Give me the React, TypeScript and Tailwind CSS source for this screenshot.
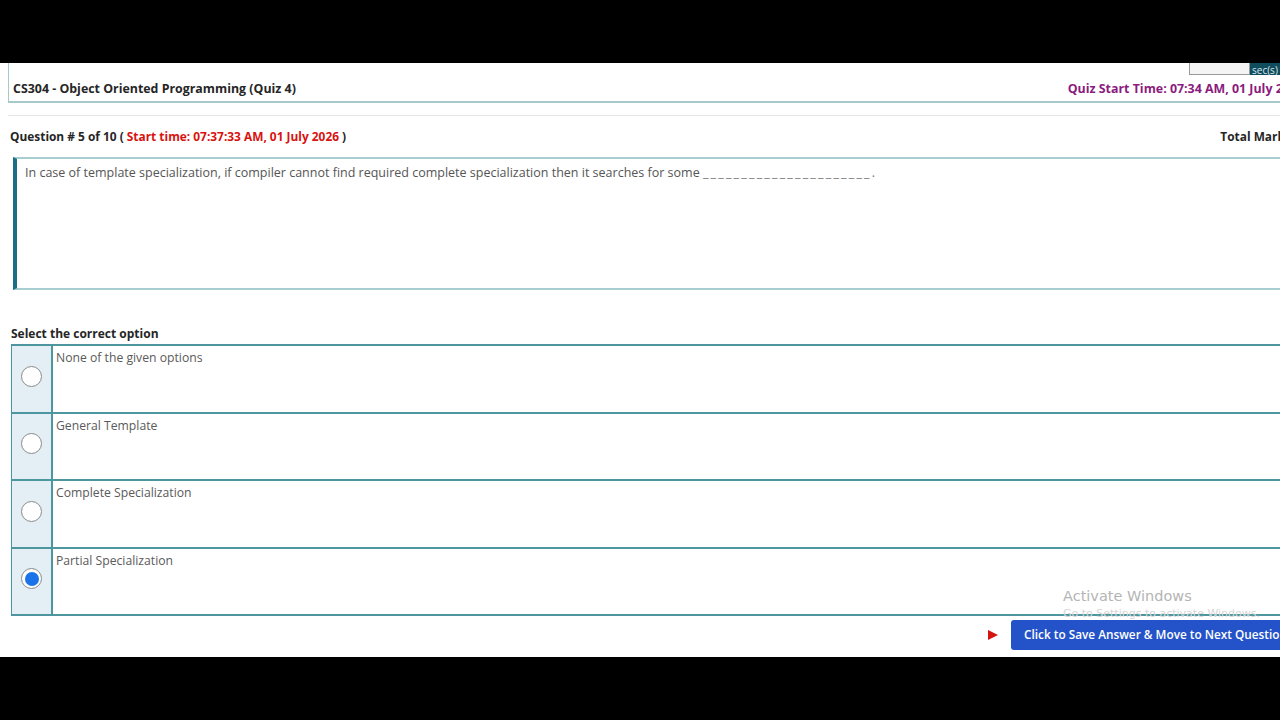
import React, { useState } from 'react';

const OPTIONS = [
  'None of the given options',
  'General Template',
  'Complete Specialization',
  'Partial Specialization',
];

const Radio = ({ checked }: { checked: boolean }) => (
  <span className="w-[21px] h-[21px] rounded-full border border-[#8a8a8a] bg-white flex items-center justify-center">
    {checked && <span className="w-[14px] h-[14px] rounded-full bg-[#1a73e8]" />}
  </span>
);

export default function App() {
  const [selected, setSelected] = useState(3);

  return (
    <div className="w-[1280px] h-[720px] bg-black overflow-hidden flex flex-col" style={{ fontFamily: '"Open Sans", "Liberation Sans", sans-serif' }}>
      <div className="h-[63px] shrink-0" />

      <div className="h-[594px] bg-white relative overflow-hidden flex flex-col">
        {/* quiz header */}
        <div className="ml-[8px] h-[40px] border-l border-b-2 border-[#a8c9cb] flex flex-col">
          <div className="h-[13px] flex justify-end -mt-[1px]">
            <div className="w-[61px] h-[13px] border border-[#9a9a9a] bg-[#f4f4f4]" />
            <div className="w-[30px] h-[13px] bg-[#0f4c5c] overflow-hidden flex items-end pl-[2px]">
              <span className="text-[10px] leading-[10px] text-[#dce8ee]">sec(s)</span>
            </div>
          </div>
          <div className="flex items-center justify-between pl-[4px] h-[24px] mt-[2px]">
            <span className="text-[12.4px] font-bold text-[#262626]">CS304 - Object Oriented Programming (Quiz 4)</span>
            <span className="text-[12.4px] font-bold text-[#8a1b7e] whitespace-nowrap -mr-[24px]">Quiz Start Time: 07:34 AM, 01 July 2026</span>
          </div>
        </div>

        <div className="ml-[8px] mt-[12px] h-[1px] bg-[#e6e6e6]" />

        {/* question heading */}
        <div className="flex items-center justify-between pl-[10px] h-[41px]">
          <span className="text-[11.9px] font-bold text-[#262626]">
            Question # 5 of 10 ( <span className="text-[#d8120f]">Start time: 07:37:33 AM, 01 July 2026</span> )
          </span>
          <span className="text-[11.9px] font-bold text-[#262626] whitespace-nowrap -mr-[24px]">Total Marks: 1</span>
        </div>

        {/* question text */}
        <div className="ml-[13px] h-[133px] border-l-4 border-l-[#1a6f85] border-y-2 border-y-[#a6cdcf] pl-[8px] pt-[5px]">
          <p className="text-[12.5px] text-[#555]">
            In case of template specialization, if compiler cannot find required complete specialization then it searches for some{' '}
            <span className="tracking-[2.2px] text-[#777]">______________________.</span>
          </p>
        </div>

        <div className="pl-[11px] mt-[34px] h-[20px] flex items-center">
          <span className="text-[12px] font-bold text-[#262626]">Select the correct option</span>
        </div>

        {/* options */}
        <div className="ml-[11px] border-t-2 border-[#4c969f] flex flex-col">
          {OPTIONS.map((opt, i) => (
            <div
              key={opt}
              onClick={() => setSelected(i)}
              className="h-[67.5px] flex border-b-2 border-[#4c969f] cursor-pointer"
            >
              <div className="w-[42px] bg-[#e3eef5] border-l border-r-2 border-[#4c969f] flex items-center justify-center pb-[5px]">
                <Radio checked={selected === i} />
              </div>
              <div className="flex-1 pl-[3px] pt-[4px] text-[12.2px] leading-[16px] text-[#5a5a5a]">
                {opt}
              </div>
            </div>
          ))}
        </div>

        {/* save button */}
        <div className="flex items-center justify-end mt-[4px] gap-[12px] -mr-[20px]">
          <svg width="12" height="12" viewBox="0 0 12 12">
            <path d="M1 1 L11 6 L1 11 Z" fill="#d4140f" />
          </svg>
          <button className="h-[30px] px-[13px] bg-[#2453c9] rounded-[3px] text-white text-[11.8px] font-semibold whitespace-nowrap">
            Click to Save Answer &amp; Move to Next Question
          </button>
        </div>

        {/* windows watermark */}
        <div className="absolute left-[1063px] top-[524px] pointer-events-none" style={{ fontFamily: '"DejaVu Sans", sans-serif' }}>
          <div className="text-[14.5px] text-[#b4b4b4] leading-[18px]">Activate Windows</div>
          <div className="text-[11px] text-[#d6d6d6] leading-[18px]">Go to Settings to activate Windows.</div>
        </div>
      </div>

      <div className="flex-1" />
    </div>
  );
}
